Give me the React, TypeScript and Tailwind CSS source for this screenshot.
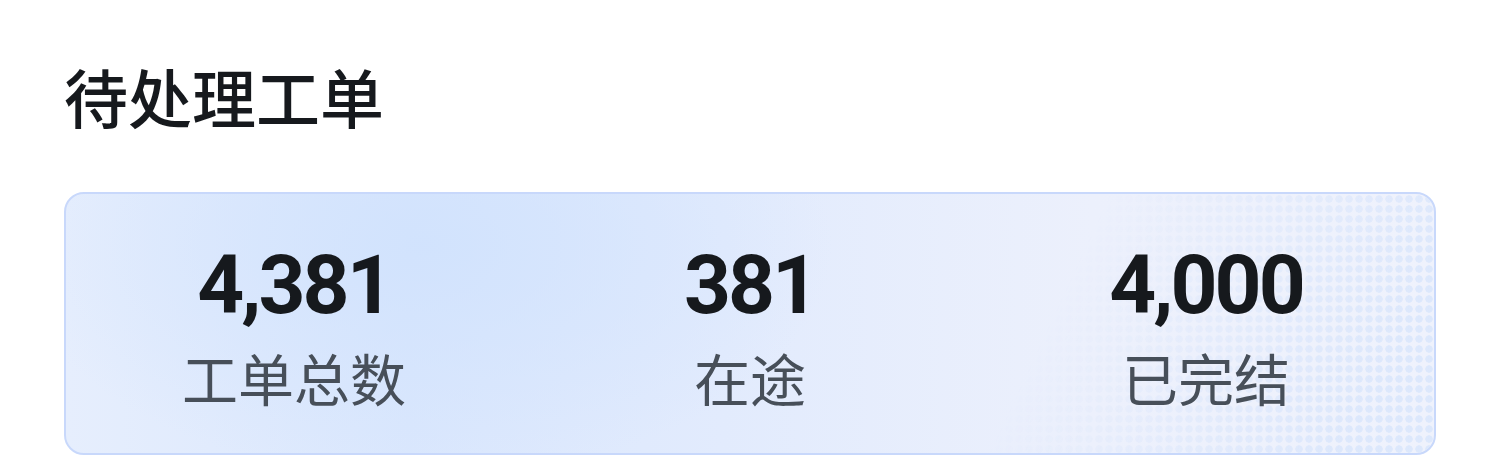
const stats = [
  { value: '4,381', label: '工单总数' },
  { value: '381', label: '在途' },
  { value: '4,000', label: '已完结' },
]

const cjk = "font-['Noto_Sans_CJK_SC',sans-serif]"

export default function App() {
  return (
    <div className="w-[1500px] h-[456px] bg-white px-[64px] pt-[51px] overflow-hidden">
      {/* Title */}
      <h1 className={`${cjk} text-[64px] leading-[88px] font-medium text-[#16191d]`}>待处理工单</h1>

      {/* Stats card */}
      <div className="relative mt-[53px] h-[263px] rounded-[20px] border-2 border-[#c8d8fb] overflow-hidden bg-[linear-gradient(90deg,#e6eefd_0%,#dae7fd_25%,#e2ebfd_48%,#ecf0fc_75%,#eff2fc_100%)]">
        {/* soft glow */}
        <div className="absolute inset-0 bg-[radial-gradient(ellipse_30%_90%_at_26%_20%,rgba(208,226,253,0.85),rgba(208,226,253,0)_100%)]" />
        {/* dot pattern */}
        <div className="absolute inset-y-0 right-0 w-[480px] bg-[radial-gradient(circle,rgba(214,228,252,0.75)_3.4px,transparent_4px)] bg-[length:10px_10px] [mask-image:linear-gradient(115deg,transparent_25%,black_85%)]" />

        <div className="relative grid grid-cols-3 h-full">
          {stats.map((s) => (
            <div key={s.label} className="flex flex-col items-center pt-[41px]">
              <span className="font-['Roboto',sans-serif] font-bold text-[82px] leading-[100px] tracking-[-3px] text-[#16191d]">
                {s.value}
              </span>
              <span className={`${cjk} text-[56px] leading-[76px] mt-[4px] text-[#474f59]`}>{s.label}</span>
            </div>
          ))}
        </div>
      </div>
    </div>
  )
}
